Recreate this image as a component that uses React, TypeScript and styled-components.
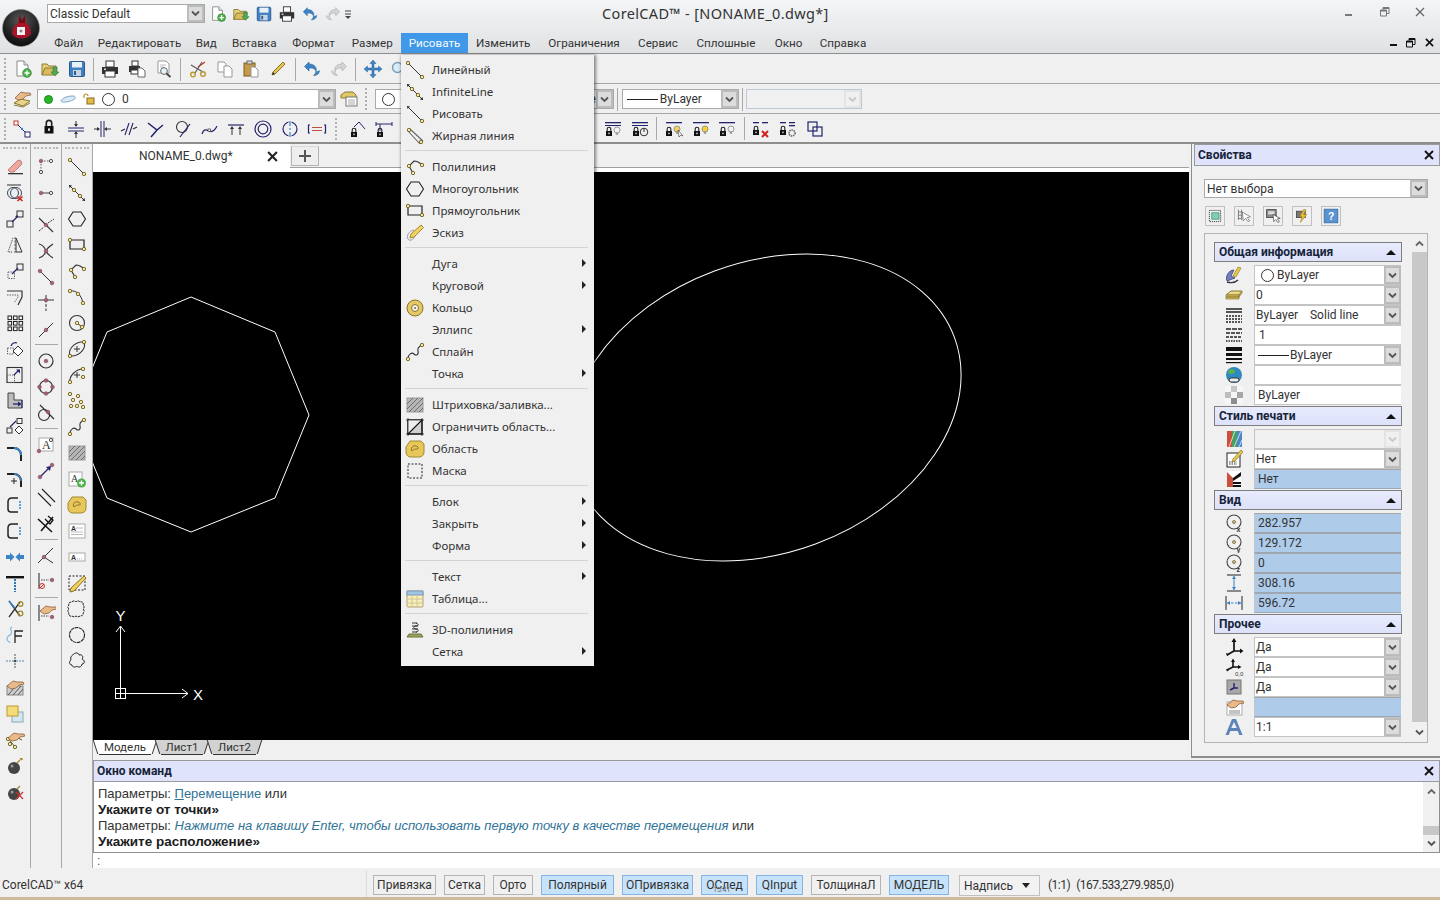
import React from "react";
import styled, { createGlobalStyle } from "styled-components";

const GlobalStyle = createGlobalStyle`
  html, body {
    margin: 0;
    padding: 0;
    background: #f0f0f0;
  }
  * { box-sizing: border-box; }
`;

const UI_FONT = `Roboto, "Noto Sans", sans-serif`;
const WIDE_FONT = `"Noto Sans", "Open Sans", sans-serif`;

const Y = (x: number, y: number) => <circle cx={x} cy={y} r="1.7" fill="#f6e9a6" stroke="#6a5a1e" strokeWidth=".9" />;
const M = (x: number, y: number) => <circle cx={x} cy={y} r="1.8" fill="#a85f78" stroke="#7a3f55" strokeWidth=".6" />;
const O = (x: number, y: number) => <circle cx={x} cy={y} r="1.6" fill="#fff" stroke="#333" strokeWidth=".9" />;
const Lock = (x: number, y: number) => (
  <>
    <path d={`M${x + 1.2} ${y}v-2a1.8 1.8 0 0 1 3.6 0v2`} fill="none" stroke="#222" strokeWidth="1.1" />
    <rect x={x} y={y} width="6" height="5" fill="#111" />
    <rect x={x + 2.4} y={y + 1.6} width="1.2" height="1.6" fill="#fff" />
  </>
);
const Bulb = (x: number, y: number, c: string) => (
  <>
    <circle cx={x} cy={y} r="3" fill={c} stroke="#777" strokeWidth=".7" />
    <rect x={x - 1.2} y={y + 2.6} width="2.4" height="2.2" fill="#999" />
  </>
);
const Bar = (x: number, y: number, w: number) => <rect x={x} y={y} width={w} height="1.3" fill="#24246e" />;
const Hand = (x: number, y: number) => (
  <path transform={`translate(${x} ${y})`} d="M0 6l6-5 4 1 6 0 1 2-5 1-3 3-5 1z" fill="#eab98a" stroke="#8a5f3a" strokeWidth=".8" />
);

const ICONS: Record<string, React.ReactNode> = {
  newDoc: (<><path d="M4 2h7l4 4v11H4z" fill="#fff" stroke="#8a8a8a" /><path d="M11 2v4h4" fill="#e8e8e8" stroke="#8a8a8a" /><circle cx="14" cy="14" r="4.4" fill="#4cb04a" stroke="#2d7a2c" strokeWidth=".6" /><path d="M14 11.5v5M11.5 14h5" stroke="#fff" strokeWidth="1.4" /></>),
  open: (<><path d="M2 5h5l2 2h7v3H6l-4 6z" fill="#e8cf7c" stroke="#8c7a34" /><path d="M2 16l3-7h12l-3 7z" fill="#d9bb5e" stroke="#8c7a34" /><path d="M13 8v5h-2l4 4 4-4h-2V8z" fill="#52a852" stroke="#2c7a2c" strokeWidth=".6" /></>),
  save: (<><rect x="2.5" y="2.5" width="15" height="15" rx="1" fill="#3f80c4" stroke="#2a5a90" /><rect x="5" y="3" width="10" height="5.5" fill="#e8f0f8" /><rect x="6" y="11" width="8" height="6" fill="#c8d4e0" /><rect x="7" y="12" width="2" height="4" fill="#2a5a90" /></>),
  print: (<><rect x="6" y="2" width="8" height="6" fill="#fff" stroke="#333" /><path d="M2 8h16v7H2z" fill="#333" /><rect x="5" y="12" width="10" height="6" fill="#fff" stroke="#333" /><rect x="4" y="9.5" width="2" height="1.5" fill="#ddd" /></>),
  printSetup: (<><rect x="5" y="2" width="6" height="5" fill="#fff" stroke="#333" /><path d="M2 7h11v6H2z" fill="#333" /><rect x="4" y="11" width="7" height="4" fill="#fff" stroke="#333" /><path d="M11 9h4l3 3v6h-7z" fill="#fff" stroke="#666" /></>),
  preview: (<><path d="M4 2h8l3 3v9H4z" fill="#fff" stroke="#999" /><path d="M6 6h6M6 8h4" stroke="#bbb" /><circle cx="10" cy="12" r="3.4" fill="#e6f0f6" stroke="#666" /><path d="M12.5 14.5l4 3.5" stroke="#444" strokeWidth="1.8" /></>),
  cut: (<><path d="M3 6l12 7M14 3L7 14" stroke="#555" strokeWidth="1.1" /><path d="M10 8l7-5" stroke="#b8392e" strokeWidth="1.2" /><circle cx="15" cy="15" r="2.3" fill="none" stroke="#b89a30" strokeWidth="1.4" /><circle cx="5" cy="15.6" r="2.3" fill="none" stroke="#b89a30" strokeWidth="1.4" /></>),
  copy: (<><path d="M3 3h6l2 2v8H3z" fill="#fff" stroke="#999" /><path d="M9 7h5l3 3v8H9z" fill="#fff" stroke="#999" /></>),
  paste: (<><rect x="3" y="4" width="11" height="13" fill="#c69a4a" stroke="#7a5c22" /><rect x="6" y="2" width="5" height="3" fill="#ddd" stroke="#666" /><path d="M10 8h4l3 3v7h-7z" fill="#fff" stroke="#999" /></>),
  brush: (<><path d="M15 3l2 2L7 15l-3 1 1-3z" fill="#e5c64f" stroke="#8a7424" /><path d="M4 16l1-3 2 2z" fill="#333" /></>),
  undo: (<path d="M7 3L2.5 7.5 7 12V9c4-.5 6.5 1 7 3.5 1-3.5-1-7.5-7-7.5zM14 12.5c-.3 1.8-1.3 3-2.5 4 3.5 0 6-2 6-5" fill="#3c84c8" stroke="#2a5f96" strokeWidth=".6" />),
  redo: (<path d="M13 3l4.5 4.5L13 12V9c-4-.5-6.5 1-7 3.5-1-3.5 1-7.5 7-7.5zM6 12.5c.3 1.8 1.3 3 2.5 4-3.5 0-6-2-6-5" fill="#d4d4d4" stroke="#a8a8a8" strokeWidth=".6" />),
  pan: (<path d="M10 1l3 3.5h-2V9h4.500V7l3.500 3-3.500 3v-2H11v4.500h2L10 19l-3-3.500h2V11H4.500v2L1 10l3.500-3v2H9V4.500H7z" fill="#3c84c8" stroke="#2a5f96" strokeWidth=".5" />),
  zoom: (<><circle cx="8.500" cy="8.500" r="5" fill="#d8ecf8" stroke="#7b9fb8" strokeWidth="1.4" /><path d="M12.500 12.500l5 5" stroke="#555" strokeWidth="2" /></>),
  layers: (<><path d="M2 14l7-4 9 2-7 5z" fill="#e6d48a" stroke="#8a7a34" /><path d="M2 16l9 2 7-4" fill="none" stroke="#8a7a34" /><path d="M3 9l6-6 4 1 5 0 1 2-5 1-3 3-5 1z" fill="#eab98a" stroke="#8a5f3a" strokeWidth=".8" /></>),
  layerState: (<><path d="M2 6l4-3h8l3 3v3H2z" fill="#e0c868" stroke="#8a7a34" /><rect x="7" y="8" width="11" height="9" fill="#fff" stroke="#777" /><path d="M9 11h7M9 13h7M9 15h7" stroke="#aaa" /></>),
  squaresLink: (<><rect x="2" y="2" width="4" height="4" fill="#fff" stroke="#c0392b" /><rect x="13" y="13" width="5" height="5" fill="#fff" stroke="#24246e" /><path d="M6 6l7 7" stroke="#24246e" /><circle cx="10" cy="10" r="1.2" fill="#3c84c8" /></>),
  lock: (<g transform="translate(-5 -6.500) scale(1.500)">{Lock(7, 9)}</g>),
  horiz: (<><path d="M2 9h16M2 12h16" stroke="#24246e" /><path d="M10 2v5M10 14v5" stroke="#333" /><path d="M8 5l2 3 2-3zM8 15l2-3 2 3z" fill="#333" /></>),
  vert: (<><path d="M9 2v16M12 2v16" stroke="#24246e" /><path d="M2 10h5M14 10h5" stroke="#333" /><path d="M5 8l3 2-3 2zM15 8l-3 2 3 2z" fill="#333" /></>),
  hatch: (<><path d="M6 16L10 4M10 16L14 4" stroke="#24246e" strokeWidth="1.1" /><path d="M2 12l4-2M14 10l4-2" stroke="#333" strokeWidth="1.3" /></>),
  perp: (<path d="M2 4l9 7 6-5M11 11L5 18" fill="none" stroke="#24246e" strokeWidth="1.5" />),
  tangent: (<><circle cx="9" cy="8" r="5.5" fill="none" stroke="#333" strokeWidth="1.1" /><path d="M17 5L7 18" stroke="#24246e" strokeWidth="1.2" /></>),
  curveNode: (<><path d="M2 15c2-6 5-4 7-3s5 1 8-5" fill="none" stroke="#24246e" strokeWidth="1.2" /><rect x="8" y="10" width="2.500" height="2.500" fill="#fff" stroke="#333" strokeWidth=".7" /></>),
  topArrows: (<><path d="M2 6h16" stroke="#24246e" strokeWidth="1.2" /><path d="M6 16V9M14 16V9" stroke="#333" /><path d="M4 10l2-3 2 3zM12 10l2-3 2 3z" fill="#333" /></>),
  concentric: (<><circle cx="10" cy="10" r="8" fill="none" stroke="#24246e" strokeWidth="1.2" /><circle cx="10" cy="10" r="4.800" fill="none" stroke="#24246e" strokeWidth="1.2" /></>),
  split: (<><circle cx="10" cy="10" r="7" fill="none" stroke="#24246e" strokeWidth="1.2" /><path d="M10 1v18" stroke="#f0f0f0" strokeWidth="3" /><path d="M10 2v5M10 9v2M10 13v5" stroke="#3c84c8" strokeWidth="1.200" /></>),
  equalDim: (<><path d="M3 6H1.500v8H3M17 6h1.500v8H17" fill="none" stroke="#24246e" strokeWidth="1.200" /><path d="M5 8.500h10M5 11.500h10" stroke="#c0392b" strokeWidth=".9" /></>),
  lockAngle: (<>{Lock(3, 13)}<path d="M6 8l5-5 6 7" fill="none" stroke="#24246e" /></>),
  lockDim: (<>{Lock(3, 13)}<path d="M2 5h16M2 3v4M18 3v4M6 5v7" fill="none" stroke="#24246e" /></>),
  lockBulbOff: (<>{Lock(3, 12)}{Bulb(14, 11, "#f4f4f4")}<rect x="2" y="3" width="16" height="1.300" fill="#24246e" /><rect x="2" y="6" width="16" height="1" fill="#24246e" /></>),
  lockPower: (<>{Lock(3, 12)}<circle cx="14" cy="13" r="3.800" fill="none" stroke="#333" /><path d="M14 9v4" stroke="#333" /><rect x="2" y="3" width="16" height="1.300" fill="#24246e" /><rect x="2" y="6" width="16" height="1" fill="#24246e" /></>),
  dimBulbCur: (<>{Lock(2, 12)}{Bulb(13, 10, "#f4d460")}{Bar(2, 3, 16)}<path d="M14 11l1 7 2-2 2 1z" fill="#fff" stroke="#333" strokeWidth=".6" /></>),
  dimBulbOn: (<>{Lock(3, 12)}{Bulb(14, 10, "#f8d22e")}{Bar(2, 3, 16)}</>),
  dimBulbOff: (<>{Lock(3, 12)}{Bulb(14, 10, "#f2f2f2")}{Bar(2, 3, 16)}</>),
  lockDel: (<>{Lock(2, 11)}{Bar(2, 3, 6)}{Bar(11, 3, 6)}<path d="M11 12l6 6M17 12l-6 6" stroke="#d0211c" strokeWidth="2" /></>),
  lockGear: (<>{Lock(2, 11)}{Bar(2, 3, 6)}{Bar(11, 3, 6)}{Bar(11, 6, 6)}<circle cx="14" cy="14" r="3" fill="none" stroke="#666" strokeWidth="1.500" strokeDasharray="1.500 .7" /></>),
  overlap: (<><rect x="3" y="3" width="9" height="9" fill="none" stroke="#24246e" strokeWidth="1.200" /><rect x="8" y="8" width="9" height="9" fill="none" stroke="#24246e" strokeWidth="1.200" /></>),

  eraser: (<><path d="M3 13L12 4c1-1 3-1 4 0s1 3 0 4l-7 7H5z" fill="#eea8a0" stroke="#b88078" /><rect x="3" y="16" width="15" height="1.300" fill="#333" /></>),
  delDup: (<><path d="M2 2h14" stroke="#333" /><circle cx="8" cy="10" r="5.500" fill="#e8f0f5" stroke="#445" /><circle cx="11" cy="10" r="5.500" fill="none" stroke="#445" /><path d="M12.500 13.500l5 4.500M17.500 13.500l-5 4.500" stroke="#d0211c" strokeWidth="1.600" /></>),
  scaleSq: (<><rect x="2" y="12" width="6" height="6" fill="none" stroke="#333" /><rect x="12" y="2" width="6" height="6" fill="none" stroke="#333" /><path d="M7 13l6-6" stroke="#24246e" strokeWidth="1.200" /><path d="M12 6l1 2-3 0z" fill="#24246e" /></>),
  mirror: (<><path d="M10 2v16" stroke="#666" strokeDasharray="2 1.500" /><path d="M8 3L3 17h5" fill="none" stroke="#333" strokeDasharray="1 1" /><path d="M11 3l6 14h-6z" fill="none" stroke="#333" /></>),
  moveSq: (<><rect x="3" y="11" width="6.500" height="6.500" fill="none" stroke="#666" strokeDasharray="1.500 1" /><rect x="12" y="3" width="6" height="6" fill="none" stroke="#333" /><path d="M7 13l6-6" stroke="#24246e" strokeWidth="1.300" /></>),
  offset: (<><path d="M2 4h15v6l-4 8" fill="none" stroke="#333" strokeWidth="1.200" /><path d="M2 8h11v2l-4 6" fill="none" stroke="#666" strokeDasharray="1.500 1" /></>),
  array: (<>{[3, 8.500, 14].flatMap((y) => [3, 8.500, 14].map((x) => <rect key={`${x}-${y}`} x={x} y={y} width="3.600" height="3.600" fill="none" stroke="#222" strokeWidth="1" />))}</>),
  rotate: (<><rect x="2.500" y="9" width="6" height="6" fill="none" stroke="#666" strokeDasharray="1.500 1" /><path d="M13 7l5 5-5 5-5-5z" fill="#fff" stroke="#333" /><path d="M6 7c1-3 4-4 6-3" fill="none" stroke="#24246e" strokeWidth="1.200" /></>),
  scaleDash: (<><rect x="2" y="2.500" width="15" height="15" fill="none" stroke="#333" strokeWidth="1.100" /><rect x="2" y="10" width="7.500" height="7.500" fill="none" stroke="#666" strokeDasharray="1.500 1" /><path d="M9 10l5-5" stroke="#24246e" strokeWidth="1.300" /><path d="M11 4.500h4v4z" fill="#24246e" /></>),
  stretch: (<><path d="M3 2h6v7h8v8H3z" fill="#bdbdbd" stroke="#444" /><path d="M8 13h7" stroke="#24246e" strokeWidth="1.300" /><path d="M13 10.500l3.500 2.500-3.500 2.500z" fill="#24246e" /><path d="M17 9v8" stroke="#24246e" /></>),
  arrowCopy: (<><rect x="2" y="11" width="5" height="5" fill="none" stroke="#333" /><rect x="12" y="1.500" width="5" height="5" fill="none" stroke="#333" /><path d="M14 9l4 4-4 4-4-4z" fill="#fff" stroke="#333" /><path d="M5 10l6-6" stroke="#24246e" strokeWidth="1.200" /></>),
  fillet: (<><path d="M2 5h7c4 0 7 3 7 7v6" fill="none" stroke="#222" strokeWidth="2" /><path d="M9 5c4 0 7 3 7 7" fill="none" stroke="#3c84c8" strokeWidth="2" /></>),
  filletPlus: (<><path d="M2 5h7c4 0 7 3 7 7v6" fill="none" stroke="#222" strokeWidth="2" /><path d="M9 5c4 0 7 3 7 7" fill="none" stroke="#3c84c8" strokeWidth="1.500" /><path d="M9 9v6M6 12h6" stroke="#222" /></>),
  roundG: (<><path d="M13 3H7C4 3 3 5 3 7v7c0 2 1 3 3 3h7" fill="none" stroke="#222" strokeWidth="1.500" /><circle cx="15" cy="7" r="1" fill="#3c84c8" /><circle cx="15" cy="10" r="1" fill="#3c84c8" /><circle cx="15" cy="13" r="1" fill="#3c84c8" /></>),
  arrowsIn: (<path d="M1 8h4V5.500L9.500 10 5 14.500V12H1zM19 8h-4V5.500L10.500 10l4.500 4.500V12h4z" fill="#3c84c8" />),
  tBeam: (<><rect x="1" y="3" width="18" height="2.400" fill="#111" /><path d="M10 6v13" stroke="#2c74b8" strokeWidth="2" strokeDasharray="2 1" /></>),
  scissorsBlue: (<><path d="M4 18L15 3M4 2l11 15" stroke="#333" strokeWidth="1.300" /><path d="M4 2l6 7" stroke="#3c84c8" strokeWidth="1.500" /><circle cx="15.500" cy="5" r="2.300" fill="none" stroke="#a08a30" strokeWidth="1.300" /><circle cx="15.500" cy="14.500" r="2.300" fill="none" stroke="#a08a30" strokeWidth="1.300" /></>),
  curveF: (<><path d="M7 2c-4 2 2 4-1 7s-4 2-4 5 3 2 3 4" fill="none" stroke="#79b6dc" strokeWidth="1.100" /><path d="M10 18V6h8M10 11h7" fill="none" stroke="#222" strokeWidth="1.300" /></>),
  crossDot: (<><path d="M1 10h8M11 10h8" stroke="#5a8db0" strokeDasharray="2 1" /><path d="M10 3v14" stroke="#555" strokeDasharray="2 1" /><circle cx="10" cy="10" r="1.200" fill="#444" /></>),
  handHatch: (<><rect x="2" y="9" width="16" height="9" fill="#cfcfcf" stroke="#888" /><path d="M3 18l8-9M8 18l8-9M13 18l5-6" stroke="#555" />{Hand(2, 3)}</>),
  stackSq: (<><rect x="7" y="8" width="11" height="10" fill="#d5e6f2" stroke="#8aa" /><rect x="2" y="2" width="11" height="10" fill="#f5dc7a" stroke="#b89a30" /></>),
  handNodes: (<><path d="M3 8l7 9M7 5l10 5" fill="none" stroke="#6a5a1e" />{Y(3, 9)}{Y(10, 17)}{Y(5, 14)}{Hand(3, 2)}</>),
  bomb: (<><circle cx="9" cy="12" r="6" fill="#444" /><circle cx="7" cy="10" r="1.500" fill="#999" /><path d="M12 7l3-3" stroke="#a88a3a" strokeWidth="1.500" /><path d="M15 2l1 2 2-1" stroke="#d8a030" /></>),
  bombX: (<><circle cx="9" cy="12" r="6" fill="#444" /><circle cx="7" cy="10" r="1.500" fill="#999" /><path d="M12 7l3-3" stroke="#a88a3a" strokeWidth="1.500" /><path d="M11 10l7 7M18 10l-7 7" stroke="#c9302c" strokeWidth="1.300" /></>),

  nodesL: (<><path d="M5 4h8M5 4v10" stroke="#555" strokeDasharray="1.500 1.500" />{M(5, 4)}{O(15, 4)}{O(5, 15)}</>),
  lineM: (<><path d="M5 10h10" stroke="#444" />{M(5, 10)}{O(15, 10)}</>),
  xDash: (<><path d="M3 3l14 14" stroke="#333" strokeWidth="1.100" /><path d="M3 16l5-4M12 8l6-4" stroke="#333" strokeDasharray="2 1" />{M(10, 10)}</>),
  xCurve: (<><path d="M3 3c4 1 6 4 7 7s4 5 7 7M3 17c4-1 6-4 7-7s4-5 7-7" fill="none" stroke="#333" strokeWidth="1.100" />{M(10, 10)}</>),
  lineMM: (<><path d="M4 4l12 12" stroke="#333" />{M(4, 4)}{M(16, 16)}</>),
  crossM: (<><path d="M2 7h16" stroke="#333" /><path d="M10 2v16" stroke="#333" strokeDasharray="3 1.500" />{M(10, 7)}</>),
  diagM: (<><path d="M3 18L17 4" stroke="#333" />{M(10, 11)}</>),
  circleM: (<><circle cx="10" cy="10" r="7" fill="none" stroke="#333" strokeWidth="1.200" />{M(10, 10)}</>),
  circle4M: (<><circle cx="10" cy="10" r="6.500" fill="none" stroke="#333" strokeWidth="1.200" />{M(10, 3.500)}{M(10, 16.500)}{M(3.500, 10)}{M(16.500, 10)}</>),
  tanM: (<><circle cx="8" cy="12" r="5.500" fill="none" stroke="#333" strokeWidth="1.200" /><path d="M4 2l14 14" stroke="#333" strokeWidth="1.200" />{M(12, 9)}</>),
  boxA: (<><rect x="3" y="3" width="14" height="13" fill="#fff" stroke="#aaa" /><text x="6" y="14" fontSize="12" fontFamily="Liberation Serif, serif" fill="#333">A</text>{M(3, 16)}{O(15, 5)}</>),
  arrowM: (<><path d="M4 16L14 6" stroke="#24246e" strokeWidth="1.200" /><path d="M10 6l5-1-1 5z" fill="#24246e" />{M(4, 16)}{M(16, 4)}</>),
  doubleDiag: (<path d="M2 6l13 13M6 2l13 13" stroke="#222" strokeWidth="1.100" />),
  perpSq: (<><path d="M2 6l14 13M5 18L17 4" fill="none" stroke="#111" strokeWidth="1.500" /><path d="M9 6l5 5 3-4-5-4" fill="none" stroke="#111" strokeWidth="1.300" /></>),
  angleM: (<><path d="M17 3L8 12M8 12l9 6M8 12L2 18" fill="none" stroke="#333" />{M(8, 12)}</>),
  vertNo: (<><path d="M3 2v16" stroke="#333" strokeWidth="1.100" /><path d="M5 9h8" stroke="#444" strokeDasharray="1.500 1" />{M(16, 9)}<circle cx="6" cy="15" r="2.500" fill="none" stroke="#c9302c" /><path d="M4 17l4-4" stroke="#c9302c" /></>),
  vertHand: (<><path d="M3 2v16" stroke="#333" strokeWidth="1.100" /><path d="M5 13h8" stroke="#444" strokeDasharray="1.500 1" />{M(16, 14)}{Hand(4, 2)}</>),

  line: (<><path d="M3 3l14 14" stroke="#333" />{Y(3, 3)}{Y(17, 17)}</>),
  infinite: (<><path d="M2 2l16 16" stroke="#333" /><path d="M2 2l3 .5-2.500 2.500zM18 18l-3-.5 2.500-2.500z" fill="#222" />{Y(7, 7)}{Y(13, 13)}</>),
  ray: (<><path d="M2 2l15 15" stroke="#333" /><path d="M2 2l3 .5-2.500 2.500z" fill="#333" />{Y(17, 17)}</>),
  thick: (<><path d="M3 5l12 13M5 3l13 12" stroke="#666" strokeWidth="1.100" />{Y(4, 4)}{Y(16, 16)}</>),
  polyArc: (<><path d="M9 4c3 0 6 2 8 4M9 4L4 9l4 7" fill="none" stroke="#333" strokeWidth="1.100" />{Y(17, 8)}{Y(4, 9)}{Y(8, 16)}</>),
  hexagon: (<path d="M6 3h8l4.500 7-4.500 7H6l-4.500-7z" fill="none" stroke="#222" strokeWidth="1.100" />),
  rectNode: (<><path d="M3 5h14v9H3z" fill="none" stroke="#222" strokeWidth="1.200" />{Y(3, 5)}{Y(17, 14)}</>),
  sketch: (<><path d="M9 7C4 8 1 13 3 16s6 0 7-3" fill="none" stroke="#999" /><path d="M16 2l2.500 2.500L9 14l-4 1 1-4z" fill="#f0d266" stroke="#a08a30" /></>),
  arcNodes: (<><path d="M3 4c6-1 11 3 13 12" fill="none" stroke="#333" />{Y(3, 4)}{Y(11, 7)}{Y(16, 16)}</>),
  circleNodes: (<><circle cx="10" cy="10" r="7.500" fill="none" stroke="#333" strokeWidth="1.100" /><path d="M10 10l5 4" stroke="#333" />{Y(10, 10)}{Y(15, 14)}</>),
  ellipseN: (<><ellipse cx="10" cy="10" rx="9" ry="5" transform="rotate(-40 10 10)" fill="none" stroke="#333" strokeWidth="1.100" /><path d="M10 7v6M7 10h6" stroke="#333" />{Y(3, 17)}{Y(17, 3)}</>),
  ellipseArc: (<><path d="M3 17c-1-6 6-13 13-13" fill="none" stroke="#333" strokeWidth="1.100" /><path d="M10 7v6M7 10h6" stroke="#333" />{Y(3, 17)}{Y(16, 4)}{Y(16, 12)}</>),
  points: (<>{Y(3, 3)}{Y(11, 5)}{Y(6, 9)}{Y(14, 11)}{Y(4, 15)}{Y(10, 15)}{Y(16, 16)}</>),
  spline: (<><path d="M3 17c0-5 4-7 6-5s5 1 4-3 2-5 4-6" fill="none" stroke="#333" strokeWidth="1.100" />{Y(3, 17)}{Y(17, 3)}</>),
  hatchFill: (<><rect x="2" y="3" width="16" height="14" fill="#b7b7b7" stroke="#999" /><path d="M2 9l6-6M2 14l11-11M4 17L18 3M9 17l9-9M14 17l4-4" stroke="#6c6c6c" /></>),
  aPlus: (<><rect x="2" y="3" width="13" height="14" fill="#fff" stroke="#aaa" /><text x="4" y="13" fontSize="10" fontFamily="Liberation Serif, serif" fill="#333">A</text><circle cx="14.500" cy="14" r="4.500" fill="#4cb04a" /><path d="M14.500 11.500v5M12 14h5" stroke="#fff" strokeWidth="1.400" /></>),
  region: (<><path d="M5 2h11l3 3v8c0 3-2 5-5 5H6c-3 0-5-2-5-5V8z" fill="#e8c75a" stroke="#a08a30" /><path d="M7 12c-2-3 1-6 4-5s3 3 1 3-3 0-5 2z" fill="none" stroke="#8a7424" /></>),
  textBox: (<><rect x="2" y="3" width="16" height="14" fill="#fff" stroke="#aaa" /><text x="4" y="10" fontSize="7" fontFamily="Liberation Sans, sans-serif" fontWeight="700" fill="#333">A</text><path d="M9 7h7M4 11h12M4 13.500h12" stroke="#bbb" /></>),
  textLine: (<><rect x="2" y="6" width="16" height="8" fill="#fff" stroke="#aaa" /><text x="4" y="12.500" fontSize="7" fontFamily="Liberation Sans, sans-serif" fontWeight="700" fill="#333">A</text><path d="M10 12h6" stroke="#aaa" strokeDasharray="1 1" /></>),
  pencilBox: (<><rect x="2" y="3" width="16" height="14" fill="none" stroke="#222" strokeDasharray="2 1.500" /><path d="M17 3l2 2L7 18l-4 1 1-4z" fill="#efcf5e" stroke="#8a7424" /></>),
  cloudRect: (<path d="M5 3c1-1.500 3-1.500 4 0 1-1.500 3-1.500 4 0 2-1 4 1 3 3 1.500 1 1.500 3 0 4 1.500 1 1.500 3 0 4 1 2-1 3-3 3-1 1-3 1-4 0-1 1-3 1-4 0-2 1-4-1-3-3-1.500-1-1.500-3 0-4-1.500-1-1.500-3 0-4-1-2 1-3 3-3z" fill="none" stroke="#222" strokeWidth="1" strokeDasharray="2.500 .7" />),
  cloudCircle: (<circle cx="10" cy="10" r="7.500" fill="none" stroke="#222" strokeWidth="1.100" strokeDasharray="3.500 .6" />),
  cloudBlob: (<path d="M7 3c1-1.500 5-1.500 5 1 3-1 5 2 3 4 3 1 3 5 0 5 0 3-4 4-5 2-2 2-5 1-5-1-3 0-3-4-1-5-1-3 1-5 3-6z" fill="none" stroke="#222" strokeWidth="1" />),
  donut: (<><circle cx="10" cy="10" r="8" fill="#e6c868" stroke="#8a7424" /><circle cx="10" cy="10" r="3.500" fill="#f0f0f0" stroke="#8a7424" /><circle cx="10" cy="10" r="1" fill="#8a7424" /></>),
  boundary: (<><rect x="3" y="3" width="14" height="14" fill="#d0d0d0" stroke="#111" strokeWidth="1.300" /><path d="M3 3h14L3 17z" fill="#eeeeee" /><path d="M3 17L17 3" stroke="#111" strokeWidth="1.100" /><path d="M1 3h18M1 17h18M3 1v18M17 1v18" stroke="#111" strokeWidth=".7" /></>),
  mask: (<rect x="3" y="3" width="14" height="14" fill="none" stroke="#222" strokeDasharray="2 1.500" />),
  table: (<><rect x="2" y="2" width="16" height="16" rx="1" fill="#f8eeb8" stroke="#b0a278" /><rect x="2" y="2" width="16" height="4" fill="#9fc4e8" stroke="#7a9cbc" /><path d="M7 6v12M12 6v12M2 10h16M2 14h16" stroke="#d0c498" /></>),
  poly3d: (<><path d="M2 17h16l-2-3H4z" fill="#9ea45a" stroke="#6e7238" /><path d="M7 3h5M7 6h6M7 9h6M7 12h5" stroke="#333" strokeWidth="1.100" /><path d="M11 3c3 1 3 3 0 3s-3 3 0 3 3 3 0 3" fill="none" stroke="#333" /></>),

  selectObj: (<><rect x="3" y="3" width="14" height="14" fill="none" stroke="#222" strokeDasharray="1.500 1" /><rect x="6" y="6" width="9" height="8" fill="#7fd0b8" stroke="#4a8e7c" /></>),
  pickAdd: (<><path d="M3 2v13M7 2v13M3 5h4M3 9h4M3 13h4" stroke="#666" /><path d="M8 5l1 11 3-3 3 4 2-1-3-4 4-1z" fill="#fff" stroke="#555" strokeWidth=".8" /></>),
  pickSet: (<><rect x="2" y="2" width="12" height="10" fill="#888" stroke="#444" /><rect x="4" y="4" width="8" height="4" fill="#ddd" /><path d="M10 8l1 9 2.500-2.500L16 18l2-1-2.500-3.500L19 13z" fill="#fff" stroke="#333" strokeWidth=".8" /></>),
  quick: (<><rect x="3" y="4" width="11" height="8" fill="#777" stroke="#444" /><path d="M12 2l-5 9h3l-2 7 8-10h-4l3-6z" fill="#e8bd2e" stroke="#8a7424" strokeWidth=".6" /></>),
  help: (<><rect x="1.500" y="1.500" width="17" height="17" fill="#5b93d0" stroke="#2f6aa6" /><text x="6.200" y="15" fontSize="13" fontWeight="700" fontFamily="Liberation Sans, sans-serif" fill="#fff">?</text></>),
  colorProp: (<><path d="M3 16c-2-5 2-11 7-11l-3 6 4 2z" fill="#7080c8" stroke="#334" strokeWidth=".7" /><path d="M14 2l3 1-5 9-3-1z" fill="#e5c64f" stroke="#8a7424" strokeWidth=".6" /><path d="M3 17c4 1 8 1 11-2" stroke="#334" strokeWidth="1.400" fill="none" /></>),
  layerProp: (<><path d="M2 10l5-4h11l-3 4z" fill="#ecd98a" stroke="#8a7a34" /><path d="M2 10h13v2H2zM2 12h13v2H2zM15 10l3-4v2l-3 4z" fill="#d9bd58" stroke="#8a7a34" strokeWidth=".7" /></>),
  ltProp: (<><path d="M2 4h16M2 7h16" stroke="#222" strokeWidth="1.400" /><path d="M2 11h16M2 14h16M2 17h16" stroke="#222" strokeWidth="1.400" strokeDasharray="2 1" /></>),
  ltScale: (<><path d="M2 4h16" stroke="#222" strokeWidth="1.500" strokeDasharray="5 1" /><path d="M2 8h16" stroke="#222" strokeWidth="1.500" strokeDasharray="4 1" /><path d="M2 12h16" stroke="#222" strokeWidth="1.500" strokeDasharray="3 1" /><path d="M2 16h16" stroke="#222" strokeWidth="1.500" strokeDasharray="1.500 1" /></>),
  lwProp: (<><rect x="2" y="2" width="16" height="4" fill="#111" /><rect x="2" y="8" width="16" height="3" fill="#111" /><rect x="2" y="13" width="16" height="2" fill="#111" /><rect x="2" y="17" width="16" height="1.200" fill="#111" /></>),
  globe: (<><circle cx="10" cy="10" r="8" fill="#2f8ac0" /><path d="M5 5c3-2 5-1 6 1s-3 3-5 3-2-2-1-4z" fill="#58b24e" /><rect x="5" y="13" width="10" height="4" rx="2" fill="#eee" stroke="#333" /></>),
  checker: (<><rect x="1" y="1" width="18" height="18" fill="#f6f6f6" /><rect x="7" y="1" width="6" height="6" fill="#c6c6c6" /><rect x="1" y="7" width="6" height="6" fill="#bdbdbd" /><rect x="13" y="7" width="6" height="6" fill="#a6a6a6" /><rect x="7" y="13" width="6" height="6" fill="#8e8e8e" /></>),
  pstyle: (<><rect x="3" y="2" width="5" height="16" fill="#c8503c" /><rect x="8" y="2" width="5" height="16" fill="#48a060" /><path d="M13 2h5v16h-5z" fill="#4a88c8" /><path d="M5 18l6-16M10 18l7-16M15 18l3-7" stroke="#fff" strokeWidth=".7" /></>),
  ptable: (<><rect x="3" y="4" width="13" height="14" fill="#fff" stroke="#222" /><path d="M5 13h8M5 15h8" stroke="#333" strokeDasharray="1.500 1" /><path d="M17 1l2 2-8 9-3 1 1-3z" fill="#e5c64f" stroke="#8a7424" strokeWidth=".7" /></>),
  pcolor: (<><rect x="3" y="2" width="14" height="16" fill="#fff" /><path d="M3 18V3l6 6v9z" fill="#c8503c" /><path d="M9 9l8-6v4L9 12zM9 13h8v2H9zM9 16h8v2H9z" fill="#111" /></>),
  targetX: (<><circle cx="10" cy="9" r="7" fill="none" stroke="#444" strokeWidth="1.100" /><circle cx="10" cy="9" r="1.500" fill="#e5c64f" stroke="#555" strokeWidth=".7" /><text x="12.500" y="18.500" fontSize="7" fontWeight="700" fontFamily="Liberation Sans, sans-serif" fill="#333">x</text></>),
  targetY: (<><circle cx="10" cy="9" r="7" fill="none" stroke="#444" strokeWidth="1.100" /><circle cx="10" cy="9" r="1.500" fill="#e5c64f" stroke="#555" strokeWidth=".7" /><text x="12.500" y="18.500" fontSize="7" fontWeight="700" fontFamily="Liberation Sans, sans-serif" fill="#333">y</text></>),
  targetZ: (<><circle cx="10" cy="9" r="7" fill="none" stroke="#444" strokeWidth="1.100" /><circle cx="10" cy="9" r="1.500" fill="#e5c64f" stroke="#555" strokeWidth=".7" /><text x="12.500" y="18.500" fontSize="7" fontWeight="700" fontFamily="Liberation Sans, sans-serif" fill="#333">z</text></>),
  heightDim: (<><path d="M3 2h14M3 18h14" stroke="#222" /><path d="M10 3v14" stroke="#3c84c8" /><path d="M8 6l2-3 2 3zM8 14l2 3 2-3z" fill="#3c84c8" /></>),
  widthDim: (<><path d="M2 3v14M18 3v14" stroke="#222" /><path d="M3 10h14" stroke="#3c84c8" strokeDasharray="2.500 1.500" /><path d="M6 8l-3 2 3 2zM14 8l3 2-3 2z" fill="#3c84c8" /></>),
  ucs: (<><path d="M10 14V3M10 14h8M10 14l-7 4" stroke="#111" strokeWidth="1.700" /><path d="M7.500 5L10 1l2.500 4zM16 11.500l3.500 2.500-3.500 2.500zM2 16l1 3 2.500-1.500z" fill="#111" /></>),
  ucs00: (<><path d="M9 10V3M9 10h7M9 10l-6 3" stroke="#111" strokeWidth="1.600" /><path d="M7 5l2-3.500L11 5zM14 8l3.500 2-3.500 2zM2 12l1 2.500 2-1.500z" fill="#111" /><text x="11" y="19" fontSize="6" fontFamily="Liberation Sans, sans-serif" fill="#444">0,0</text></>),
  ucsBox: (<><rect x="3" y="3" width="14" height="14" fill="#a8a8a8" stroke="#777" /><path d="M10 11V6M10 11h4M10 11l-4 2" stroke="#24246e" strokeWidth="1.400" /></>),
  annot: (<><rect x="3" y="5" width="15" height="13" fill="#fff" stroke="#aaa" /><path d="M5 14h11M5 16h11" stroke="#888" />{Hand(3, 2)}</>),
  annotA: (<path d="M1.500 18L8 2h4l6.500 16h-3.300l-1.400-4H6.200l-1.400 4zM7.200 11h5.600L10 5z" fill="#5d84b8" />),
};

const IconSvg = styled.svg<{ $s: number }>`
  width: ${(p) => p.$s}px;
  height: ${(p) => p.$s}px;
  display: block;
  flex: none;
`;

function Icon({ name, size = 20 }: { name: string; size?: number }) {
  return (
    <IconSvg viewBox="0 0 20 20" $s={size}>
      {ICONS[name]}
    </IconSvg>
  );
}

const Page = styled.div`
  position: relative;
  width: 1440px;
  height: 900px;
  overflow: hidden;
  display: flex;
  flex-direction: column;
  background: #f0f0f0;
  color: #333;
  font: 12px ${UI_FONT};
`;

const TitleBand = styled.header`
  height: 54px;
  flex: none;
  background: linear-gradient(#f4f5f6, #dfe1e3);
  border-bottom: 1px solid #8e8e8e;
`;
const TitleRow = styled.div`
  height: 33px;
  display: grid;
  grid-template-columns: 602px auto 1fr;
  align-items: start;
`;
const Quick = styled.div`
  display: flex;
  align-items: center;
  padding: 4px 0 0 47px;
`;
const QuickBtn = styled.div`
  width: 23px;
  height: 18px;
  display: flex;
  align-items: center;
  justify-content: center;
`;
const WindowTitle = styled.div`
  font: 14.500px/18px ${WIDE_FONT};
  padding-top: 4px;
  color: #333;
  white-space: nowrap;
  letter-spacing: 0.35px;
`;
const WinControls = styled.div`
  display: flex;
  justify-content: flex-end;
  padding: 3px 3px 0 0;
`;
const WinBtn = styled.div<{ $w: number }>`
  width: ${(p) => p.$w}px;
  height: 18px;
  display: flex;
  align-items: center;
  justify-content: center;
  color: #777;
`;
const MenuRow = styled.nav`
  height: 20px;
  display: flex;
  padding-left: 46px;
`;
const MenuItem = styled.div<{ $active?: boolean; $w: number }>`
  width: ${(p) => p.$w}px;
  flex: none;
  text-align: center;
  line-height: 21px;
  height: 20px;
  font-size: 11.650px;
  white-space: nowrap;
  color: ${(p) => (p.$active ? "#f4fbff" : "#333")};
  background: ${(p) => (p.$active ? "#3f98e8" : "transparent")};
`;
const MdiControls = styled.div`
  margin-left: auto;
  display: flex;
  padding-right: 2px;
  color: #111;
`;
const MdiBtn = styled.div`
  width: 18px;
  height: 19px;
  display: flex;
  align-items: center;
  justify-content: center;
`;
const LogoWrap = styled.div`
  position: absolute;
  left: 2px;
  top: 9px;
  width: 38px;
  height: 38px;
`;

const Toolbar = styled.div<{ $thick?: boolean }>`
  height: 30px;
  flex: none;
  display: flex;
  align-items: center;
  padding-top: 1px;
  background: #f0f0f0;
  border-bottom: ${(p) => (p.$thick ? "2px solid #8e8e8e" : "1px solid #a6a6a6")};
`;
const Grip = styled.div<{ $left: number; $right: number }>`
  width: 2px;
  height: 22px;
  flex: none;
  margin: 0 ${(p) => p.$right}px 0 ${(p) => p.$left}px;
  border-left: 2px dotted #b0b0b0;
`;
const ToolBtn = styled.div`
  width: 26.800px;
  height: 24px;
  flex: none;
  display: flex;
  align-items: center;
  justify-content: center;
`;
const ToolSep = styled.div`
  width: 1px;
  height: 23px;
  flex: none;
  margin: 0 3px;
  background: #a8a8a8;
`;
const HiddenSpan = styled.div<{ $w: number }>`
  width: ${(p) => p.$w}px;
  flex: none;
`;
const Combo = styled.div<{ $w: number; $h?: number; $off?: boolean; $ml?: number }>`
  width: ${(p) => p.$w}px;
  height: ${(p) => p.$h ?? 20}px;
  flex: none;
  margin-left: ${(p) => p.$ml ?? 0}px;
  display: flex;
  align-items: center;
  background: ${(p) => (p.$off ? "#f0f0f0" : "#fff")};
  border: 1px solid ${(p) => (p.$off ? "#bcc8d4" : "#a9a9a9")};
  color: #333;
  overflow: hidden;
`;
const ComboText = styled.div`
  flex: 1;
  min-width: 0;
  padding-left: 2px;
  display: flex;
  align-items: center;
  gap: 4px;
  white-space: pre;
  overflow: hidden;
  line-height: 16px;
`;
const LayerText = styled(ComboText)`
  padding-left: 6px;
  gap: 7px;
`;
const ClippedText = styled(ComboText)`
  justify-content: flex-end;
`;
const ArrowBox = styled.div<{ $off?: boolean }>`
  width: 17px;
  align-self: stretch;
  flex: none;
  display: flex;
  align-items: center;
  justify-content: center;
  background: ${(p) => (p.$off ? "#f0f0f0" : "#dcdcdc")};
  border: 2px solid ${(p) => (p.$off ? "#e4e4e4" : "#bcbcbc")};
`;
const Ring = styled.span`
  width: 13px;
  height: 13px;
  flex: none;
  border-radius: 50%;
  border: 1px solid #333;
  background: #fff;
`;
const LineSample = styled.span`
  width: 31px;
  height: 1px;
  flex: none;
  margin: 0 -2px 0 2px;
  background: #222;
`;
const Dot = styled.span`
  width: 9px;
  height: 9px;
  flex: none;
  border-radius: 50%;
  background: #28b528;
  border: 1px solid #1b8a1b;
`;

const Chevron = ({ off }: { off?: boolean }) => (
  <svg width="9" height="7" viewBox="0 0 9 7">
    <path d="M1 1.500l3.500 3.500L8 1.500" fill="none" stroke={off ? "#c8c8c8" : "#555"} strokeWidth="1.800" />
  </svg>
);

const Workspace = styled.div`
  flex: 1;
  min-height: 0;
  display: flex;
`;
const LeftTools = styled.aside`
  width: 93px;
  flex: none;
  display: flex;
`;
const ToolColumn = styled.div`
  width: 31px;
  flex: none;
  display: flex;
  flex-direction: column;
  align-items: center;
  padding-top: 9.500px;
  border-right: 1px solid #a8a8a8;
  position: relative;
  &::before {
    content: "";
    position: absolute;
    left: 3px;
    right: 3px;
    top: 3px;
    border-top: 2px dotted #b8b8b8;
  }
`;
const ColBtn = styled.div`
  height: 26.050px;
  flex: none;
  display: flex;
  align-items: center;
  justify-content: center;
`;
const ColSep = styled.div`
  width: 23px;
  height: 6px;
  flex: none;
  display: flex;
  align-items: center;
  &::after {
    content: "";
    width: 100%;
    height: 1px;
    background: #a8a8a8;
  }
`;
const RightArea = styled.div`
  flex: 1;
  min-width: 0;
  display: flex;
  flex-direction: column;
`;
const UpperArea = styled.div`
  height: 614px;
  flex: none;
  display: flex;
`;

const DocArea = styled.main`
  width: 1096px;
  flex: none;
  display: flex;
  flex-direction: column;
`;
const TabStrip = styled.div`
  height: 28px;
  flex: none;
  display: flex;
  align-items: flex-start;
  background: linear-gradient(#f0f0f0 0 23px, #a0a0a0 23px 24px, #fff 24px);
`;
const DocTab = styled.div`
  width: 197px;
  height: 28px;
  flex: none;
  display: flex;
  align-items: center;
  background: #fff;
  padding: 0 12px 4px 46px;
  color: #333;
`;
const TabClose = styled.div`
  margin-left: auto;
  display: flex;
`;
const AddTab = styled.div`
  width: 28px;
  height: 20px;
  flex: none;
  margin: 2px 0 0 1px;
  display: flex;
  align-items: center;
  justify-content: center;
  background: #eeeeee;
  border: 1px solid #b4b4b4;
  border-top-color: #dadada;
`;
const Canvas = styled.div`
  height: 568px;
  flex: none;
  background: #000;
  overflow: hidden;
`;
const SheetBar = styled.div`
  height: 15px;
  flex: none;
  display: flex;
  padding-left: 6px;
  gap: 10px;
`;
const SheetTab = styled.div<{ $active?: boolean; $w: number }>`
  position: relative;
  width: ${(p) => p.$w}px;
  height: 15px;
  display: flex;
  align-items: center;
  justify-content: center;
  font-size: 11.500px;
  line-height: 13px;
  color: #333;
  background: ${(p) => (p.$active ? "#fff" : "#d2d2d2")};
  border-bottom: 1px solid #333;
  &::before,
  &::after {
    content: "";
    position: absolute;
    top: 0;
    width: 7px;
    height: 14px;
    background: ${(p) => (p.$active ? "#fff" : "#d2d2d2")};
  }
  &::before {
    left: -4px;
    border-left: 1px solid #333;
    transform: skewX(18deg);
  }
  &::after {
    right: -4px;
    border-right: 1px solid #333;
    transform: skewX(-18deg);
  }
  & > span {
    position: relative;
    z-index: 1;
  }
`;

const PropsPanel = styled.aside`
  flex: 1;
  min-width: 0;
  margin-left: 2px;
  padding-left: 2px;
  border-left: 1px solid #8e8e8e;
  display: flex;
  flex-direction: column;
  border-bottom: 2px solid #8e8e8e;
`;
const PaneTitle = styled.div<{ $h: number }>`
  height: ${(p) => p.$h}px;
  flex: none;
  display: flex;
  align-items: center;
  justify-content: space-between;
  padding: 0 5px 0 3px;
  background: #dfe3fb;
  border: 1px solid #9a9a9a;
  font-weight: 700;
  color: #16243a;
`;
const PropsBody = styled.div`
  padding: 13px 0 0 10px;
  display: flex;
  flex-direction: column;
`;
const PropTools = styled.div`
  display: flex;
  gap: 9px;
  margin: 8px 0 7px 1px;
`;
const PropTool = styled.div`
  width: 20px;
  height: 20px;
  background: #f0f0f0;
  border: 1px solid #c0c0c0;
  display: flex;
  align-items: center;
  justify-content: center;
`;
const GridBox = styled.div`
  width: 224px;
  height: 510px;
  display: flex;
  border: 1px solid #b4b4b4;
`;
const Sections = styled.div`
  width: 207px;
  flex: none;
  padding: 8px 0 0 9px;
`;
const Section = styled.section`
  margin-bottom: 1px;
`;
const SectionHead = styled.div`
  width: 188px;
  height: 20px;
  display: flex;
  align-items: center;
  justify-content: space-between;
  padding: 0 5px 0 4px;
  margin-bottom: 3px;
  background: linear-gradient(#e8ebfd, #dde1fa);
  border: 1px solid #7e7e7e;
  font-weight: 700;
  color: #16243a;
`;
const UpTriangle = styled.span`
  width: 0;
  height: 0;
  border-left: 5px solid transparent;
  border-right: 5px solid transparent;
  border-bottom: 5px solid #111;
`;
const PropRow = styled.div`
  height: 20px;
  display: flex;
`;
const PropIcon = styled.div`
  width: 40px;
  flex: none;
  display: flex;
  align-items: center;
  justify-content: center;
`;
const PropField = styled.div<{ $tone: "white" | "blue" | "off" }>`
  width: 147px;
  height: 20px;
  flex: none;
  display: flex;
  align-items: center;
  color: #333;
  background: ${(p) => (p.$tone === "blue" ? "#aecbea" : p.$tone === "off" ? "#f0f0f0" : "#fff")};
  border-top: 1px solid ${(p) => (p.$tone === "blue" ? "#a6a6a6" : "#c4c4c4")};
  border-left: 1px solid #c4c4c4;
  border-bottom: 1px solid ${(p) => (p.$tone === "blue" ? "#98a8b8" : "#c4c4c4")};
`;
const PropText = styled.div<{ $pad: number }>`
  flex: 1;
  min-width: 0;
  display: flex;
  align-items: center;
  gap: 3px;
  padding-left: ${(p) => p.$pad}px;
  white-space: pre;
  overflow: hidden;
`;
const VScroll = styled.div`
  flex: 1;
  display: flex;
  flex-direction: column;
  align-items: center;
  background: #f0f0f0;
`;
const ScrollEnd = styled.div<{ $h: number }>`
  height: ${(p) => p.$h}px;
  width: 100%;
  flex: none;
  display: flex;
  align-items: center;
  justify-content: center;
`;
const ScrollThumb = styled.div<{ $h: number; $top?: number }>`
  width: 100%;
  height: ${(p) => p.$h}px;
  flex: none;
  margin-top: ${(p) => p.$top ?? 0}px;
  background: #c8c8c8;
`;

const CommandWindow = styled.section`
  height: 110px;
  flex: none;
  padding-top: 2px;
  display: flex;
  flex-direction: column;
`;
const History = styled.div`
  height: 71px;
  flex: none;
  display: flex;
  background: #fff;
  border-left: 1px solid #8e8e8e;
  border-right: 1px solid #8e8e8e;
  border-bottom: 1px solid #8e8e8e;
  overflow: hidden;
`;
const HistoryText = styled.div`
  flex: 1;
  padding: 4px 0 0 4px;
  font: 13px/16px "Liberation Sans", Arial, sans-serif;
  color: #222;
`;
const CmdLine = styled.div<{ $bold?: boolean }>`
  height: 16px;
  white-space: nowrap;
  font-weight: ${(p) => (p.$bold ? 700 : 400)};
  font-size: ${(p) => (p.$bold ? "13.500px" : "13px")};
  color: ${(p) => (p.$bold ? "#1c1c1c" : "#333")};
`;
const CmdLink = styled.span<{ $hint?: boolean }>`
  color: #2f7396;
  font-style: ${(p) => (p.$hint ? "italic" : "normal")};
`;
const CmdKey = styled.span`
  text-decoration: underline;
`;
const CmdScroll = styled.div`
  width: 16px;
  flex: none;
  display: flex;
  flex-direction: column;
  align-items: center;
  background: #f0f0f0;
`;
const CmdInput = styled.div`
  flex: 1;
  padding: 2px 0 0 4px;
  background: #fff;
  font: 12px/12px "Liberation Sans", Arial, sans-serif;
  color: #555;
`;

const StatusBar = styled.footer`
  height: 32px;
  flex: none;
  display: flex;
  align-items: flex-start;
  padding-top: 7px;
  background: #f0f0f0;
  border-bottom: 3px solid #cdbb9b;
`;
const StatusLabel = styled.div`
  width: 366px;
  flex: none;
  padding-left: 2px;
  line-height: 20px;
`;
const StatusGroup = styled.div`
  display: flex;
  gap: 8px;
  padding-left: 6px;
  border-left: 1px solid #dcdcdc;
  position: relative;
  margin-top: -5px;
  padding-top: 5px;
  height: 27px;
`;
const StatusBtn = styled.div<{ $w: number; $on?: boolean }>`
  position: relative;
  width: ${(p) => p.$w}px;
  height: 20px;
  flex: none;
  display: flex;
  align-items: center;
  justify-content: center;
  white-space: nowrap;
  background: ${(p) => (p.$on ? "#c6e3fb" : "#f0f0f0")};
  border: 1px solid ${(p) => (p.$on ? "#86b4de" : "#b4b4b4")};
`;
const TinyGhost = styled.span`
  position: absolute;
  left: 11px;
  top: 10px;
  font-size: 7px;
  line-height: 8px;
  color: #666;
`;
const StatusCombo = styled.div`
  width: 81px;
  height: 21px;
  flex: none;
  margin-left: 2px;
  display: flex;
  align-items: center;
  justify-content: space-between;
  padding: 0 9px 0 4px;
  background: #f2f2f2;
  border: 1px solid #c0c0c0;
`;
const DownTriangle = styled.span`
  width: 0;
  height: 0;
  border-left: 4px solid transparent;
  border-right: 4px solid transparent;
  border-top: 5px solid #222;
`;
const StatusText = styled.div<{ $ml: number }>`
  margin-left: ${(p) => p.$ml}px;
  line-height: 20px;
  letter-spacing: -0.5px;
  white-space: nowrap;
`;

const DrawMenu = styled.div`
  position: absolute;
  left: 401px;
  top: 55px;
  width: 193px;
  height: 611px;
  padding-top: 3.500px;
  background: #f0f0f0;
  box-shadow: 1px 1px 3px 1px rgba(0, 0, 0, 0.45);
  font: 11.500px ${WIDE_FONT};
  z-index: 5;
`;
const DrawItem = styled.div`
  position: relative;
  height: 22px;
  display: flex;
  align-items: center;
  padding: 0 0 1px 31px;
  color: #333;
  white-space: nowrap;
`;
const DrawIcon = styled.span`
  position: absolute;
  left: 4px;
  top: 1px;
`;
const SubArrow = styled.span`
  position: absolute;
  right: 8px;
  top: 6px;
  width: 0;
  height: 0;
  border-top: 4px solid transparent;
  border-bottom: 4px solid transparent;
  border-left: 4px solid #222;
`;
const DrawSep = styled.div`
  height: 9px;
  display: flex;
  align-items: flex-start;
  padding: 3px 6px 0 4px;
  &::after {
    content: "";
    flex: 1;
    height: 1px;
    background: #d4d4d4;
  }
`;

const MENUS = [
  { name: "Файл", w: 45.500 },
  { name: "Редактировать", w: 96 },
  { name: "Вид", w: 37.500 },
  { name: "Вставка", w: 58.500 },
  { name: "Формат", w: 60 },
  { name: "Размер", w: 57.500 },
  { name: "Рисовать", w: 67 },
  { name: "Изменить", w: 70.500 },
  { name: "Ограничения", w: 91 },
  { name: "Сервис", w: 57 },
  { name: "Сплошные", w: 79 },
  { name: "Окно", w: 46 },
  { name: "Справка", w: 63 },
];

const BAR_ONE: (string | null)[] = ["newDoc", "open", "save", null, "print", "printSetup", "preview", null, "cut", "copy", "paste", "brush", null, "undo", "redo", null, "pan", "zoom"];

const BAR_THREE_A = ["squaresLink", "lock", "horiz", "vert", "hatch", "perp", "tangent", "curveNode", "topArrows", "concentric", "split", "equalDim"];

const COL_ONE = ["eraser", "delDup", "scaleSq", "mirror", "moveSq", "offset", "array", "rotate", "scaleDash", "stretch", "arrowCopy", "fillet", "filletPlus", "roundG", "roundG", "arrowsIn", "tBeam", "scissorsBlue", "curveF", "crossDot", "handHatch", "stackSq", "handNodes", "bomb", "bombX"];
const COL_TWO: (string | null)[] = ["nodesL", "lineM", null, "xDash", "xCurve", "lineMM", "crossM", "diagM", null, "circleM", "circle4M", "tanM", null, "boxA", "arrowM", "doubleDiag", "perpSq", null, "angleM", "vertNo", null, "vertHand"];
const COL_THREE = ["line", "infinite", "hexagon", "rectNode", "polyArc", "arcNodes", "circleNodes", "ellipseN", "ellipseArc", "points", "spline", "hatchFill", "aPlus", "region", "textBox", "textLine", "pencilBox", "cloudRect", "cloudCircle", "cloudBlob"];

type DrawEntry = { icon?: string; label: string; sub?: boolean };
const DRAW_GROUPS: DrawEntry[][] = [
  [
    { icon: "line", label: "Линейный" },
    { icon: "infinite", label: "InfiniteLine" },
    { icon: "ray", label: "Рисовать" },
    { icon: "thick", label: "Жирная линия" },
  ],
  [
    { icon: "polyArc", label: "Полилиния" },
    { icon: "hexagon", label: "Многоугольник" },
    { icon: "rectNode", label: "Прямоугольник" },
    { icon: "sketch", label: "Эскиз" },
  ],
  [
    { label: "Дуга", sub: true },
    { label: "Круговой", sub: true },
    { icon: "donut", label: "Кольцо" },
    { label: "Эллипс", sub: true },
    { icon: "spline", label: "Сплайн" },
    { label: "Точка", sub: true },
  ],
  [
    { icon: "hatchFill", label: "Штриховка/заливка..." },
    { icon: "boundary", label: "Ограничить область..." },
    { icon: "region", label: "Область" },
    { icon: "mask", label: "Маска" },
  ],
  [
    { label: "Блок", sub: true },
    { label: "Закрыть", sub: true },
    { label: "Форма", sub: true },
  ],
  [
    { label: "Текст", sub: true },
    { icon: "table", label: "Таблица..." },
  ],
  [
    { icon: "poly3d", label: "3D-полилиния" },
    { label: "Сетка", sub: true },
  ],
];

type Prop = { icon: string; text?: string; tone?: "white" | "blue" | "off"; combo?: boolean; kind?: "ring" | "line"; pad?: number };
const PROP_SECTIONS: { title: string; rows: Prop[] }[] = [
  {
    title: "Общая информация",
    rows: [
      { icon: "colorProp", text: "ByLayer", combo: true, kind: "ring", pad: 6 },
      { icon: "layerProp", text: "0", combo: true },
      { icon: "ltProp", text: "ByLayer    Solid line", combo: true },
      { icon: "ltScale", text: "1", pad: 4 },
      { icon: "lwProp", text: "ByLayer", combo: true, kind: "line", pad: 1 },
      { icon: "globe" },
      { icon: "checker", text: "ByLayer" },
    ],
  },
  {
    title: "Стиль печати",
    rows: [
      { icon: "pstyle", tone: "off", combo: true },
      { icon: "ptable", text: "Нет", combo: true },
      { icon: "pcolor", text: "Нет", tone: "blue" },
    ],
  },
  {
    title: "Вид",
    rows: [
      { icon: "targetX", text: "282.957", tone: "blue" },
      { icon: "targetY", text: "129.172", tone: "blue" },
      { icon: "targetZ", text: "0", tone: "blue" },
      { icon: "heightDim", text: "308.16", tone: "blue" },
      { icon: "widthDim", text: "596.72", tone: "blue" },
    ],
  },
  {
    title: "Прочее",
    rows: [
      { icon: "ucs", text: "Да", combo: true },
      { icon: "ucs00", text: "Да", combo: true },
      { icon: "ucsBox", text: "Да", combo: true },
      { icon: "annot", tone: "blue" },
      { icon: "annotA", text: "1:1", combo: true },
    ],
  },
];

const STATUS_BUTTONS = [
  { label: "Привязка", w: 63 },
  { label: "Сетка", w: 41 },
  { label: "Орто", w: 40 },
  { label: "Полярный", w: 73, on: true },
  { label: "ОПривязка", w: 71, on: true },
  { label: "ОСлед", w: 47, on: true, ghost: true },
  { label: "QInput", w: 47, on: true },
  { label: "ТолщинаЛ", w: 70 },
  { label: "МОДЕЛЬ", w: 60, on: true },
];

const Cross = ({ size = 10, width = 1.800, color = "#111" }: { size?: number; width?: number; color?: string }) => (
  <svg width={size} height={size} viewBox="0 0 10 10">
    <path d="M1 1l8 8M9 1L1 9" stroke={color} strokeWidth={width} fill="none" />
  </svg>
);

function Logo() {
  return (
    <svg width="38" height="38" viewBox="0 0 38 38">
      <defs>
        <radialGradient id="lg" cx="50%" cy="30%" r="70%">
          <stop offset="0" stopColor="#5a5a5a" />
          <stop offset="0.6" stopColor="#262626" />
          <stop offset="1" stopColor="#0c0c0c" />
        </radialGradient>
      </defs>
      <circle cx="19" cy="19" r="18.500" fill="url(#lg)" stroke="#8a8a8a" strokeWidth=".6" />
      <path d="M10 25c0-6 3-9 6-11l1-7 3 5 3-5 1 7c3 2 5 6 5 11-5 6-14 6-19 0z" fill="#a81428" />
      <path d="M17 6l3 5 3-5v8h-6z" fill="#6e0c1a" />
      <rect x="15" y="18" width="8" height="8" fill="#f4f4f4" />
      <circle cx="19" cy="22" r="1.500" fill="#888" />
    </svg>
  );
}

function Drawing() {
  return (
    <svg width="1096" height="568" viewBox="93 172 1096 568">
      <path d="M191 297L275 332L309 415L275 498L191 532L107 498L73 415L107 332Z" fill="none" stroke="#fff" />
      <ellipse cx="765" cy="407.500" rx="202" ry="145.600" transform="rotate(-20.300 765 407.500)" fill="none" stroke="#fff" />
      <path d="M120.500 693V627M120.500 693.500H188" stroke="#fff" />
      <path d="M116 632l4.500-6 4.500 6M182 689l6 4.500-6 4.500" fill="none" stroke="#fff" />
      <rect x="115.500" y="688.500" width="10" height="10" fill="none" stroke="#fff" />
      <path d="M115.500 693.500h10M120.500 688.500v10" stroke="#fff" />
      <text x="115.500" y="621" fill="#fff" fontSize="15" fontFamily="Liberation Sans, sans-serif">Y</text>
      <text x="193" y="699.500" fill="#fff" fontSize="15" fontFamily="Liberation Sans, sans-serif">X</text>
    </svg>
  );
}

function PropertyField({ row }: { row: Prop }) {
  const tone = row.tone ?? "white";
  return (
    <PropField $tone={tone}>
      <PropText $pad={row.pad ?? (row.combo ? 1 : 3)}>
        {row.kind === "ring" && <Ring />}
        {row.kind === "line" && <LineSample />}
        {row.text}
      </PropText>
      {row.combo && (
        <ArrowBox $off={tone === "off"}>
          <Chevron off={tone === "off"} />
        </ArrowBox>
      )}
    </PropField>
  );
}

export default function App() {
  return (
    <Page>
      <GlobalStyle />
      <TitleBand>
        <TitleRow>
          <Quick>
            <Combo $w={158} $h={19}>
              <ComboText>Classic Default</ComboText>
              <ArrowBox>
                <Chevron />
              </ArrowBox>
            </Combo>
            <HiddenSpan $w={1} />
            {["newDoc", "open", "save", "print", "undo", "redo"].map((n) => (
              <QuickBtn key={n}>
                <Icon name={n} size={18} />
              </QuickBtn>
            ))}
            <svg width="8" height="10" viewBox="0 0 8 10">
              <path d="M1 2h6M1 5h6" stroke="#444" />
              <path d="M1 7h6L4 10z" fill="#444" />
            </svg>
          </Quick>
          <WindowTitle>CorelCAD™ - [NONAME_0.dwg*]</WindowTitle>
          <WinControls>
            <WinBtn $w={36}>
              <svg width="9" height="9" viewBox="0 0 9 9">
                <rect x="0" y="6" width="7" height="2" fill="#777" />
              </svg>
            </WinBtn>
            <WinBtn $w={36}>
              <svg width="10" height="10" viewBox="0 0 10 10">
                <path d="M3 2.500V.5h6v6H7M.5 3h6v6h-6z" fill="none" stroke="#777" />
                <path d="M.5 3h6v1.500h-6zM3 .5h6V2H3z" fill="#777" />
              </svg>
            </WinBtn>
            <WinBtn $w={34}>
              <Cross size={10} width={1.200} color="#666" />
            </WinBtn>
          </WinControls>
        </TitleRow>
        <MenuRow>
          {MENUS.map((m) => (
            <MenuItem key={m.name} $w={m.w} $active={m.name === "Рисовать"}>
              {m.name}
            </MenuItem>
          ))}
          <MdiControls>
            <MdiBtn>
              <svg width="9" height="9" viewBox="0 0 9 9">
                <rect x="1" y="6" width="7" height="2" fill="#111" />
              </svg>
            </MdiBtn>
            <MdiBtn>
              <svg width="10" height="10" viewBox="0 0 10 10">
                <path d="M3 2.500V.5h6v6H7M.5 3h6v6h-6z" fill="none" stroke="#111" />
                <path d="M.5 3h6v1.500h-6zM3 .5h6V2H3z" fill="#111" />
              </svg>
            </MdiBtn>
            <MdiBtn>
              <Cross size={9} />
            </MdiBtn>
          </MdiControls>
        </MenuRow>
      </TitleBand>
      <LogoWrap>
        <Logo />
      </LogoWrap>

      <Toolbar>
        <Grip $left={4} $right={3.600} />
        {BAR_ONE.map((n, i) =>
          n ? (
            <ToolBtn key={i}>
              <Icon name={n} />
            </ToolBtn>
          ) : (
            <ToolSep key={i} />
          ),
        )}
      </Toolbar>

      <Toolbar>
        <Grip $left={4} $right={2.600} />
        <ToolBtn>
          <Icon name="layers" />
        </ToolBtn>
        <Combo $w={299} $ml={1.600}>
          <LayerText>
            <Dot />
            <svg width="16" height="8" viewBox="0 0 16 8">
              <path d="M1 6c1-3 6-5 12-5 3 0 3 3 0 4-4 2-11 3-12 1z" fill="#dbe9f4" stroke="#7fa8c4" />
            </svg>
            <svg width="12" height="12" viewBox="0 0 12 12">
              <path d="M1 5V3a2 2 0 0 1 4 0" fill="none" stroke="#b88a2c" strokeWidth="1.200" />
              <rect x="4" y="5" width="7" height="6" fill="#e4bb4c" stroke="#8a6a1e" />
            </svg>
            <Ring />
            <span>0</span>
          </LayerText>
          <ArrowBox>
            <Chevron />
          </ArrowBox>
        </Combo>
        <ToolBtn>
          <Icon name="layerState" />
        </ToolBtn>
        <Grip $left={2} $right={8} />
        <Combo $w={114}>
          <LayerText>
            <Ring />
            ByLayer
          </LayerText>
        </Combo>
        <Combo $w={125}>
          <ClippedText>ByLayer    Solid line</ClippedText>
          <ArrowBox>
            <Chevron />
          </ArrowBox>
        </Combo>
        <ToolSep />
        <Combo $w={117} $ml={1}>
          <ComboText>
            <LineSample />
            ByLayer
          </ComboText>
          <ArrowBox>
            <Chevron />
          </ArrowBox>
        </Combo>
        <ToolSep />
        <Combo $w={116} $off>
          <ComboText />
          <ArrowBox $off>
            <Chevron off />
          </ArrowBox>
        </Combo>
      </Toolbar>

      <Toolbar $thick>
        <Grip $left={4} $right={2.600} />
        {BAR_THREE_A.map((n) => (
          <ToolBtn key={n}>
            <Icon name={n} />
          </ToolBtn>
        ))}
        <Grip $left={5} $right={7} />
        <ToolBtn>
          <Icon name="lockAngle" />
        </ToolBtn>
        <ToolBtn>
          <Icon name="lockDim" />
        </ToolBtn>
        <HiddenSpan $w={202} />
        <ToolBtn>
          <Icon name="lockBulbOff" />
        </ToolBtn>
        <ToolBtn>
          <Icon name="lockPower" />
        </ToolBtn>
        <ToolSep />
        <ToolBtn>
          <Icon name="dimBulbCur" />
        </ToolBtn>
        <ToolBtn>
          <Icon name="dimBulbOn" />
        </ToolBtn>
        <ToolBtn>
          <Icon name="dimBulbOff" />
        </ToolBtn>
        <ToolSep />
        <ToolBtn>
          <Icon name="lockDel" />
        </ToolBtn>
        <ToolBtn>
          <Icon name="lockGear" />
        </ToolBtn>
        <ToolBtn>
          <Icon name="overlap" />
        </ToolBtn>
      </Toolbar>

      <Workspace>
        <LeftTools>
          <ToolColumn>
            {COL_ONE.map((n, i) => (
              <ColBtn key={i}>
                <Icon name={n} />
              </ColBtn>
            ))}
          </ToolColumn>
          <ToolColumn>
            {COL_TWO.map((n, i) =>
              n ? (
                <ColBtn key={i}>
                  <Icon name={n} />
                </ColBtn>
              ) : (
                <ColSep key={i} />
              ),
            )}
          </ToolColumn>
          <ToolColumn>
            {COL_THREE.map((n, i) => (
              <ColBtn key={i}>
                <Icon name={n} />
              </ColBtn>
            ))}
          </ToolColumn>
        </LeftTools>

        <RightArea>
          <UpperArea>
            <DocArea>
              <TabStrip>
                <DocTab>
                  NONAME_0.dwg*
                  <TabClose>
                    <Cross size={11} width={1.900} color="#222" />
                  </TabClose>
                </DocTab>
                <AddTab>
                  <svg width="14" height="14" viewBox="0 0 14 14">
                    <path d="M7 1v12M1 7h12" stroke="#555" strokeWidth="2" />
                  </svg>
                </AddTab>
              </TabStrip>
              <Canvas>
                <Drawing />
              </Canvas>
              <SheetBar>
                <SheetTab $active $w={52}>
                  <span>Модель</span>
                </SheetTab>
                <SheetTab $w={42}>
                  <span>Лист1</span>
                </SheetTab>
                <SheetTab $w={43}>
                  <span>Лист2</span>
                </SheetTab>
              </SheetBar>
            </DocArea>

            <PropsPanel>
              <PaneTitle $h={22}>
                Свойства
                <Cross size={10} />
              </PaneTitle>
              <PropsBody>
                <Combo $w={224} $h={19}>
                  <ComboText>Нет выбора</ComboText>
                  <ArrowBox>
                    <Chevron />
                  </ArrowBox>
                </Combo>
                <PropTools>
                  {["selectObj", "pickAdd", "pickSet", "quick", "help"].map((n) => (
                    <PropTool key={n}>
                      <Icon name={n} size={16} />
                    </PropTool>
                  ))}
                </PropTools>
                <GridBox>
                  <Sections>
                    {PROP_SECTIONS.map((s) => (
                      <Section key={s.title}>
                        <SectionHead>
                          {s.title}
                          <UpTriangle />
                        </SectionHead>
                        {s.rows.map((r) => (
                          <PropRow key={r.icon}>
                            <PropIcon>
                              <Icon name={r.icon} size={20} />
                            </PropIcon>
                            <PropertyField row={r} />
                          </PropRow>
                        ))}
                      </Section>
                    ))}
                  </Sections>
                  <VScroll>
                    <ScrollEnd $h={18}>
                      <svg width="9" height="7" viewBox="0 0 9 7">
                        <path d="M1 5.500L4.500 2 8 5.500" fill="none" stroke="#666" strokeWidth="1.800" />
                      </svg>
                    </ScrollEnd>
                    <ScrollThumb $h={470} />
                    <ScrollEnd $h={20}>
                      <Chevron />
                    </ScrollEnd>
                  </VScroll>
                </GridBox>
              </PropsBody>
            </PropsPanel>
          </UpperArea>

          <CommandWindow>
            <PaneTitle $h={22}>
              Окно команд
              <Cross size={10} />
            </PaneTitle>
            <History>
              <HistoryText>
                <CmdLine>
                  Параметры: <CmdLink><CmdKey>П</CmdKey>еремещение</CmdLink> или
                </CmdLine>
                <CmdLine $bold>Укажите от точки»</CmdLine>
                <CmdLine>
                  Параметры: <CmdLink $hint>Нажмите на клавишу Enter, чтобы использовать первую точку в качестве перемещения</CmdLink> или
                </CmdLine>
                <CmdLine $bold>Укажите расположение»</CmdLine>
              </HistoryText>
              <CmdScroll>
                <ScrollEnd $h={18}>
                  <svg width="9" height="7" viewBox="0 0 9 7">
                    <path d="M1 5.500L4.500 2 8 5.500" fill="none" stroke="#666" strokeWidth="1.800" />
                  </svg>
                </ScrollEnd>
                <ScrollThumb $h={9} $top={26} />
                <ScrollEnd $h={16}>
                  <Chevron />
                </ScrollEnd>
              </CmdScroll>
            </History>
            <CmdInput>:</CmdInput>
          </CommandWindow>
        </RightArea>
      </Workspace>

      <StatusBar>
        <StatusLabel>CorelCAD™ x64</StatusLabel>
        <StatusGroup>
          {STATUS_BUTTONS.map((b) => (
            <StatusBtn key={b.label} $w={b.w} $on={b.on}>
              {b.label}
              {b.ghost && <TinyGhost>15:41</TinyGhost>}
            </StatusBtn>
          ))}
          <StatusCombo>
            Надпись
            <DownTriangle />
          </StatusCombo>
        </StatusGroup>
        <StatusText $ml={8}>(1:1)</StatusText>
        <StatusText $ml={6}>(167.533,279.985,0)</StatusText>
      </StatusBar>

      <DrawMenu>
        {DRAW_GROUPS.map((group, gi) => (
          <React.Fragment key={gi}>
            {gi > 0 && <DrawSep />}
            {group.map((item) => (
              <DrawItem key={item.label}>
                {item.icon && (
                  <DrawIcon>
                    <Icon name={item.icon} />
                  </DrawIcon>
                )}
                {item.label}
                {item.sub && <SubArrow />}
              </DrawItem>
            ))}
          </React.Fragment>
        ))}
      </DrawMenu>
    </Page>
  );
}
